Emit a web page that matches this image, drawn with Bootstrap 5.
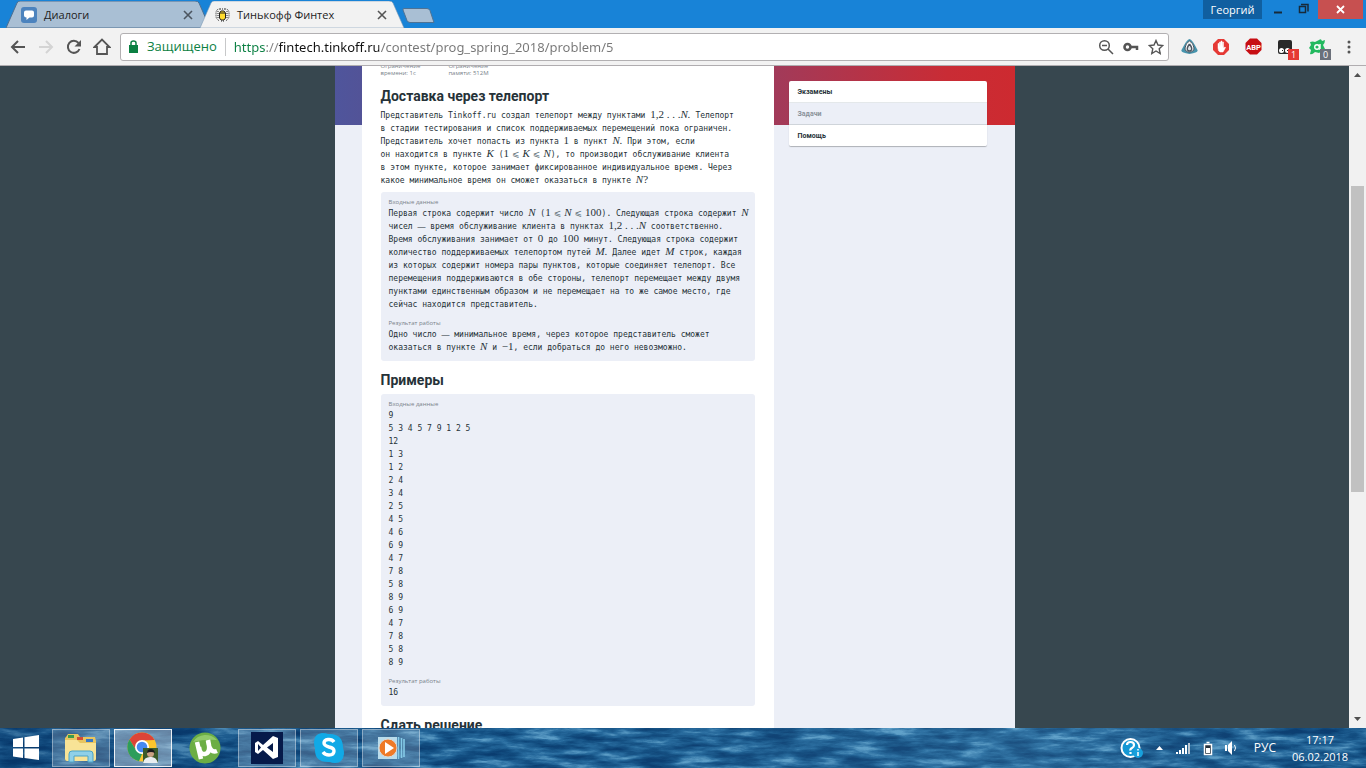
<!DOCTYPE html>
<html lang="ru">
<head>
<meta charset="utf-8">
<meta name="viewport" content="width=device-width, initial-scale=1">
<title>Тинькофф Финтех</title>
<link href="https://cdn.jsdelivr.net/npm/bootstrap@5.3.0/dist/css/bootstrap.min.css" rel="stylesheet">
<style>
body{font-family:"Open Sans","Noto Sans",sans-serif;background:#37474f}
button{border:0;background:none;padding:0;color:inherit}
svg{display:block;flex:none}
/* window frame */
.titlebar{background:#1883d7;height:28px;padding-left:6px}
.tab-shape{position:relative;width:205px;margin-right:-11px;color:#222;font-size:11px}
.tab-shape>svg.tab-bg{position:absolute;left:0;top:1px}
.tab-row{position:relative;height:28px;padding:2px 10px 0 15px;gap:7px}
.tab-row a{color:#222;text-decoration:none}
.user-btn{background:#105fa0;color:#fff;font-size:11px;width:59px;height:19px;line-height:19px}
.win-btn{width:26px;height:19px}
.close-btn{background:#c75050;width:45px;height:19px;margin-right:3px}
.toolbar{background:#f2f2f2;height:38px;border-bottom:1px solid #b0adb0;padding:4px 1px 4px 4px}
.nav-btn{width:28px;height:28px;display:flex;align-items:center;justify-content:center}
.omnibox{height:28px;background:#fff;border:1px solid #b2b0b2;border-radius:3px;margin-left:4px;padding:0 4px 0 8px;font-size:13px}
.secure{color:#0b8043;margin-left:9px;padding-right:8px}
.url-field{border:0;outline:0;padding:0;height:24px;font-size:13px;font-family:"Noto Sans",sans-serif;color:transparent;-webkit-background-clip:text;background-clip:text;background-image:linear-gradient(90deg,#0b8043 0 32px,#808080 32px 45px,#111 45px 145px,#777 145px)}
.ext{width:32px;height:28px;position:relative;display:flex;align-items:center;justify-content:center}
.ext-count{position:absolute;left:19px;top:16px;width:11px;height:11px;font-size:9px;line-height:11px;color:#fff;background:#e53935;text-align:center}
.ext-count.idle{background:#6b707a}
/* page */
.viewport{min-height:0}
.site{max-width:680px;background:#eceff7;display:grid;grid-template-columns:27px 412px 1fr;grid-template-rows:59px 1fr;margin:0 auto;flex:1;overflow:hidden}
.hero{grid-area:1/1/2/4;background:linear-gradient(90deg,#4f559c 0,#545295 6%,#a23a59 65%,#c92c35 90%,#cd2a30)}
.problem{grid-area:1/2/3/3;background:#fff;padding:0 19px;color:#263238;min-height:0;font:8px/13px "DejaVu Sans Mono",monospace}
.problem p,.problem pre{margin:0;font:inherit;overflow:visible}
.problem p{white-space:nowrap}
.problem pre{white-space:pre}
.limits{font:6px/7px "Open Sans",sans-serif;color:#78828a;margin-top:-3px;gap:28px}
.problem h2{font:700 14px/20px "Roboto",sans-serif;color:#263238;margin:9px 0 4px}
.problem h2.first{margin:9px 0 3px}
.databox{background:#eceff7;border-radius:3px;padding:6px 8px 7px}
.statement{margin-top:5px}
.databox h3{font:6px/9px "Open Sans",sans-serif;color:#78828a;margin:0}
.databox h3.result{margin-top:8px}
.tex{font:11px/1px "Liberation Serif",serif}
.tex b{font:9px/1px "DejaVu Sans",sans-serif;color:#607078;padding:0 3px}
.dash{font:8px/1px "Liberation Serif",serif}
.side{grid-area:1/3/3/4;padding:15px 28px 0 15px}
.side .list-group{--bs-list-group-border-radius:2px;box-shadow:0 1px 1px #0004}
.side .list-group-item{font:700 7px/12px "Roboto",sans-serif;padding:5px 9px 4px;border:0;border-bottom:1px solid #e4e8ea;color:#263238}
.side .list-group-item.current{background:#eceff7;color:#8b939b;border-color:#cfd4da}
.side .list-group-item:last-child{border-bottom:0}
.scroll-rail{width:17px;background:#f1f1f1}
.rail-gap{flex:0 1 103px}
.thumb{flex:0 1 306px;background:#c1c1c1;margin:0 2px}
/* taskbar */
.taskbar{height:40px;background:#175789;color:#fff;position:relative;overflow:hidden}
.taskbar>.sea{position:absolute;inset:0;width:100%;height:100%}
.taskbar>.tasks{position:relative;height:40px}
.start{width:52px}
.task{width:58px;height:38px;display:flex;align-items:center;justify-content:center;border:1px solid transparent}
.task.open{background:#ffffff33;border-color:#ffffff60}
.task.focused{background:#ffffff60;border-color:#fffd}
.tray{gap:12px;padding-right:14px;font-size:12px}
.clock{font-size:11px;line-height:17px;width:64px}
</style>
</head>
<body>
<div class="vh-100 d-flex flex-column overflow-hidden">
<header class="flex-shrink-0">
 <div class="titlebar d-flex align-items-start">
  <div class="tab-shape">
   <svg class="tab-bg" width="205" height="27" viewBox="0 0 205 27"><path d="M0 27 11 2Q12 0 14 0H189Q192 0 193 2L204 27Z" fill="#a9bfd4" stroke="#4d6f91"/></svg>
   <div class="tab-row d-flex align-items-center">
    <svg width="16" height="16" viewBox="0 0 16 16"><rect width="16" height="16" rx="3" fill="#4c83be"/><path d="M5 3.500h6q2 0 2 2v3q0 2-2 2H8.500l-3 2.500v-2.500q-2.500 0-2.500-2v-3q0-2 2-2" fill="#fff"/></svg>
    <a href="#" class="flex-fill">Диалоги</a>
    <button aria-label="Закрыть вкладку" class="me-2"><svg width="10" height="10" viewBox="0 0 10 10"><path d="m1 1 8 8M9 1 1 9" stroke="#4c5560" stroke-width="1.600"/></svg></button>
   </div>
  </div>
  <div class="tab-shape">
   <svg class="tab-bg" width="205" height="27" viewBox="0 0 205 27"><path d="M0 27 11 2Q12 0 14 0H189Q192 0 193 2L204 27Z" fill="#f2f2f2" stroke="#7a98b5" stroke-width=".6"/></svg>
   <div class="tab-row d-flex align-items-center">
    <svg width="15" height="14" viewBox="0 0 15 14"><g stroke="#222" fill="none" stroke-dasharray="1 1"><path d="M5 1Q1 1 1 5v4q1 3 4 4M10 1q4 0 4 4v4q-1 3-4 4M3 3v8M12 3v8M5 1h5M6 13h4"/></g><path d="M4.500 5 6 3h3l1.500 2v5L9 12H6l-1.500-2z" fill="#ffdc2e" stroke="#222"/><path d="M5 5h5" stroke="#222"/></svg>
    <a href="#" class="flex-fill">Тинькофф Финтех</a>
    <button aria-label="Закрыть вкладку" class="me-2"><svg width="10" height="10" viewBox="0 0 10 10"><path d="m1 1 8 8M9 1 1 9" stroke="#555" stroke-width="1.600"/></svg></button>
   </div>
  </div>
  <button aria-label="Новая вкладка" class="mt-2 ms-2"><svg width="34" height="16" viewBox="0 0 34 16"><path d="M2 .5h23q2 0 3 2l4 12H8q-2 0-3-2L1 2Q.5.5 2 .5" fill="#a9bfd4" stroke="#4d7295"/></svg></button>
  <div class="ms-auto d-flex">
   <button class="user-btn me-1">Георгий</button>
   <button class="win-btn" aria-label="Свернуть"><svg width="26" height="19"><path d="M8 12.500h8" stroke="#172a3a" stroke-width="2"/></svg></button>
   <button class="win-btn" aria-label="Развернуть"><svg width="26" height="19"><path d="M7.500 6.500h6v6h-6zM9 4.500h7v7" fill="none" stroke="#172a3a" stroke-width="1.500"/></svg></button>
   <button class="close-btn" aria-label="Закрыть"><svg width="45" height="19"><path d="m19 6 7 7M26 6l-7 7" stroke="#fff" stroke-width="1.800"/></svg></button>
  </div>
 </div>
 <div class="toolbar d-flex align-items-center">
  <button class="nav-btn" aria-label="Назад"><svg width="16" height="14" viewBox="0 0 16 14"><path d="M15 7H2M8 1 2 7l6 6" fill="none" stroke="#555" stroke-width="2"/></svg></button>
  <button class="nav-btn" disabled aria-label="Вперёд"><svg width="16" height="14" viewBox="0 0 16 14"><path d="M1 7h13M8 1l6 6-6 6" fill="none" stroke="#d4d4d4" stroke-width="2"/></svg></button>
  <button class="nav-btn" aria-label="Обновить"><svg width="16" height="16" viewBox="0 0 16 16"><path d="M13.500 10A6 6 0 1 1 12.500 4" fill="none" stroke="#555" stroke-width="2"/><path d="M15 1v6.500H8.500z" fill="#555"/></svg></button>
  <button class="nav-btn" aria-label="Домой"><svg width="18" height="17" viewBox="0 0 18 17"><path d="M1.500 9 9 1.500 16.500 9H14v7H4V9z" fill="none" stroke="#555" stroke-width="1.800"/></svg></button>
  <div class="omnibox flex-fill d-flex align-items-center">
   <svg width="9" height="13" viewBox="0 0 9 13"><path d="M0 5h9v8H0z" fill="#0b8043"/><path d="M2 6V3q0-2 2.500-2T7 3v3" fill="none" stroke="#0b8043" stroke-width="1.500"/></svg>
   <label class="secure" for="url">Защищено</label><div class="vr my-1 me-2"></div>
   <input id="url" class="url-field flex-fill" value="https://fintech.tinkoff.ru/contest/prog_spring_2018/problem/5">
   <div class="d-flex gap-2">
   <button aria-label="Масштаб"><svg width="16" height="16" viewBox="0 0 16 16" fill="none" stroke="#555" stroke-width="1.500"><circle cx="6.500" cy="6.500" r="4.800"/><path d="m10 10 5 5M4 6.500h5"/></svg></button>
   <button aria-label="Пароли"><svg width="18" height="16" viewBox="0 0 18 16"><circle cx="5.500" cy="8" r="3" fill="none" stroke="#555" stroke-width="2.600"/><path d="M8 8h7v3" fill="none" stroke="#555" stroke-width="2.500"/></svg></button>
   <button aria-label="В закладки"><svg width="16" height="16" viewBox="0 0 16 16"><path d="m8 1.500 2 4.500 4.800.5-3.600 3.200 1 4.800L8 12l-4.200 2.500 1-4.800L1.200 6.500 6 6z" fill="none" stroke="#555" stroke-width="1.400"/></svg></button>
   </div>
  </div>
  <div class="d-flex ms-1">
   <button class="ext" aria-label="Дельта"><svg width="17" height="17" viewBox="0 0 17 17"><path d="M8.500 1Q11 1 16.500 12q1 3-8 4-9-1-8-4Q6 1 8.500 1" fill="#4794ad"/><path d="M8.500 3q4 2 4.500 7 0 4-4.500 4T4 10q.5-5 4.500-7" fill="#fff" stroke="#4b5560"/><path d="M8.500 6q3 4 2 6-2 2-4 0-1-2 2-6" fill="#dce4e8" stroke="#4b5560" stroke-width="1.400"/></svg></button>
   <button class="ext" aria-label="Блокировщик"><svg width="16" height="16" viewBox="0 0 16 16"><path d="M5 0h6l5 5v6l-5 5H5l-5-5V5z" fill="#e53935"/><path d="M5 9V4.500h1V8l.5-5h1v5L8 2h1v6l.5-5h1v6L12 8q1 0 0 1.500L10 13H7Q5 12 5 9" fill="#fff" stroke="#fff" stroke-width=".5"/></svg></button>
   <button class="ext" aria-label="ABP"><svg width="17" height="17" viewBox="0 0 17 17"><path d="M5 .5h7L16.500 5v7L12 16.500H5L.5 12V5z" fill="#c70d12"/><text x="8.500" y="11.500" font-size="7.500" font-weight="700" text-anchor="middle" fill="#fff" font-family="Roboto">ABP</text></svg></button>
   <button class="ext" aria-label="Скрипты"><svg width="16" height="16" viewBox="0 0 16 16"><path d="M3 1h10q2 0 2 2v10q0 2-2 2H3q-2 0-2-2V3q0-2 2-2" fill="#292929"/><circle cx="4.500" cy="11.500" r="2.500" fill="#fff"/><circle cx="10.500" cy="11.500" r="2.500" fill="#fff"/><path d="M5 11.500h1M10 11.500h1" stroke="#222"/></svg><span class="ext-count">1</span></button>
   <button class="ext" aria-label="Avast"><svg width="17" height="16" viewBox="0 0 17 16"><path d="M1 3q3-1 5 0l4-2q2-2 3 1l3-1q0 3-2 5l2 4q0 3-3 2l-3 2-4-1q-3 3-5 2l1-4-2-2 2-3z" fill="#22b95f"/><circle cx="8" cy="8" r="2.300" fill="none" stroke="#fff" stroke-width="1.400"/><path d="M11 5v6" stroke="#fff" stroke-width="1.400"/></svg><span class="ext-count idle">0</span></button>
   <button class="ext" aria-label="Меню"><svg width="4" height="14" viewBox="0 0 4 14" fill="#555"><circle cx="2" cy="2" r="1.500"/><circle cx="2" cy="7" r="1.500"/><circle cx="2" cy="12" r="1.500"/></svg></button>
  </div>
 </div>
</header>

<main class="viewport d-flex flex-fill">
 <div class="flex-fill d-flex overflow-hidden">
 <div class="site">
  <div class="hero"></div>
  <article class="problem">
   <div class="limits d-flex"><div>Ограничение<br>времени: 1с</div><div>Ограничение<br>памяти: 512M</div></div>
   <h2 class="first">Доставка через телепорт</h2>
   <p>Представитель Tinkoff.ru создал телепорт между пунктами <span class="tex">1,2 . . .<i>N.</i></span> Телепорт<br>в стадии тестирования и список поддерживаемых перемещений пока ограничен.<br>Представитель хочет попасть из пункта <span class="tex">1</span> в пункт <span class="tex"><i>N.</i></span> При этом, если<br>он находится в пункте <span class="tex"><i>K</i></span> (<span class="tex">1<b>⩽</b><i>K</i><b>⩽</b><i>N</i></span>), то производит обслуживание клиента<br>в этом пункте, которое занимает фиксированное индивидуальное время. Через<br>какое минимальное время он сможет оказаться в пункте <span class="tex"><i>N</i>?</span></p>
   <section class="databox statement">
    <h3>Входные данные</h3>
    <p>Первая строка содержит число <span class="tex"><i>N</i></span> (<span class="tex">1<b>⩽</b><i>N</i><b>⩽</b>100</span>). Следующая строка содержит <span class="tex"><i>N</i></span><br>чисел <span class="dash">—</span> время обслуживание клиента в пунктах <span class="tex">1,2 . . .<i>N</i></span> соответственно.<br>Время обслуживания занимает от <span class="tex">0</span> до <span class="tex">100</span> минут. Следующая строка содержит<br>количество поддерживаемых телепортом путей <span class="tex"><i>M.</i></span> Далее идет <span class="tex"><i>M</i></span> строк, каждая<br>из которых содержит номера пары пунктов, которые соединяет телепорт. Все<br>перемещения поддерживаются в обе стороны, телепорт перемещает между двумя<br>пунктами единственным образом и не перемещает на то же самое место, где<br>сейчас находится представитель.</p>
    <h3 class="result">Результат работы</h3>
    <p>Одно число <span class="dash">—</span> минимальное время, через которое представитель сможет<br>оказаться в пункте <span class="tex"><i>N</i></span> и <span class="tex">−1</span>, если добраться до него невозможно.</p>
   </section>
   <h2>Примеры</h2>
   <section class="databox">
    <h3>Входные данные</h3>
<pre>9
5 3 4 5 7 9 1 2 5
12
1 3
1 2
2 4
3 4
2 5
4 5
4 6
6 9
4 7
7 8
5 8
8 9
6 9
4 7
7 8
5 8
8 9</pre>
    <h3 class="result">Результат работы</h3>
    <pre>16</pre>
   </section>
   <h2>Сдать решение</h2>
  </article>
  <nav class="side">
   <div class="list-group">
    <a href="#" class="list-group-item">Экзамены</a>
    <a href="#" class="list-group-item current">Задачи</a>
    <a href="#" class="list-group-item">Помощь</a>
   </div>
  </nav>
 </div>
 </div>
 <div class="scroll-rail d-flex flex-column">
  <button aria-label="Вверх"><svg width="17" height="17"><path d="m5 11 3.500-4 3.500 4z" fill="#505050"/></svg></button>
  <div class="rail-gap"></div><div class="thumb"></div>
  <button class="mt-auto" aria-label="Вниз"><svg width="17" height="17"><path d="m5 6 3.500 4L12 6z" fill="#505050"/></svg></button>
 </div>
</main>

<footer class="taskbar flex-shrink-0">
 <svg class="sea" preserveAspectRatio="none"><defs>
  <filter id="waves" x="0" y="0" width="100%" height="100%" color-interpolation-filters="sRGB"><feTurbulence type="fractalNoise" baseFrequency=".025 .13" numOctaves="5" seed="12"/><feColorMatrix values="1.800 0 0 0 -.4 1.800 0 0 0 -.4 1.800 0 0 0 -.4 0 0 0 0 1"/><feComponentTransfer><feFuncR type="table" tableValues=".04 .08 .16 .38"/><feFuncG type="table" tableValues=".24 .32 .43 .64"/><feFuncB type="table" tableValues=".44 .52 .63 .8"/></feComponentTransfer></filter>
  <linearGradient id="shade"><stop offset="0" stop-color="#022d60" stop-opacity=".4"/><stop offset=".35" stop-color="#022d60" stop-opacity=".05"/><stop offset=".75" stop-color="#7ab0d0" stop-opacity=".15"/><stop offset="1" stop-color="#022d60" stop-opacity=".1"/></linearGradient></defs>
  <rect width="100%" height="100%" filter="url(#waves)"/><rect width="100%" height="100%" fill="url(#shade)"/></svg>
 <div class="tasks d-flex align-items-center">
  <button aria-label="Пуск" class="start d-flex justify-content-center"><svg width="28" height="26" viewBox="0 0 28 26" fill="#fff"><path d="m1 4 10-1.500V12H1zM12.500 2.200 27 0v12H12.500zM1 13.500h10V23L1 21.500zM12.500 13.500H27V25l-14.500-2z"/></svg></button>
  <div class="d-flex gap-1">
  <button class="task open" aria-label="Проводник"><svg width="34" height="30" viewBox="0 0 34 30"><path d="M2 4 4 1h10l2 3h15l1 4v18q0 2-2 2H3q-2 0-2-2V5z" fill="#e8c560"/><path d="M4 2h6v3H4z" fill="#3d9c4a"/><path d="M13 4h6v3h-6z" fill="#d34d32"/><path d="M22 6h7v3h-7z" fill="#3978c4"/><path d="M1 7h12l3 3h16v16l-2 2H3l-2-2z" fill="#f8e396"/><path d="M5 29v-8q0-3 3-3h18q3 0 3 3v8h-5v-6H10v6z" fill="#8fd0e8" stroke="#4ba3c7"/></svg></button>
  <button class="task open focused" aria-label="Chrome"><svg width="32" height="32" viewBox="0 0 32 32"><circle cx="15" cy="15" r="14.500" fill="#fbc52d"/><path d="M2.500 7.500A14.500 14.500 0 0 1 27.600 8L15 8.500 9 18z" fill="#dc4437"/><path d="M2.500 7.500 9 18l6 4-3 7.300A14.500 14.500 0 0 1 2.500 7.500" fill="#2d9d5b"/><circle cx="15" cy="15" r="7" fill="#fff"/><circle cx="15" cy="15" r="5.300" fill="#4688ef"/><path d="M16 16h15v15H16z" fill="#3a5b2a"/><path d="M16 31q1-6 7-6 6-1 8 6" fill="#e8edf0"/><circle cx="23.500" cy="21.500" r="3.500" fill="#caa183"/><path d="M20 21q0-4 4-4 3 0 4 4-4-2-8 0" fill="#19191b"/></svg></button>
  <button class="task" aria-label="uTorrent"><svg width="32" height="32" viewBox="0 0 32 32"><circle cx="16" cy="16" r="15.500" fill="#6cae45"/><path d="M4 10A15 15 0 0 1 28 8Q16 7 4 10" fill="#91c96a"/><path d="m8 10 4 17M10 15q1 8 6 7 5-1 4-9l-1-5M19 9q2 13 9 10" fill="none" stroke="#fff" stroke-width="4.500"/></svg></button>
  <button class="task open" aria-label="Visual Studio"><svg width="32" height="32" viewBox="0 0 32 32"><path d="M0 0h32v32H0z" fill="#061a4a"/><path d="m22 4 5 2v19l-5 2L12 18l-5 4-3-2v-9l3-2 5 4zM7 12v7l3-3.500zm15-1-6 4.500 6 4.500z" fill="#fff" fill-rule="evenodd"/></svg></button>
  <button class="task open" aria-label="Skype"><svg width="30" height="30" viewBox="0 0 30 30"><path d="M8 0q4 0 6 1 15-1 15 14 1 2 1 6-1 9-9 9-3 0-5-1Q0 30 1 15 0 13 0 9 0 1 8 0" fill="#11a9e6"/><path d="M20 9q-2-3-6-2.500-4 .5-4 3.500 0 2.500 5 4 5 1 5 4 0 4-5 4-4 0-6-3" fill="none" stroke="#fff" stroke-width="3.400"/></svg></button>
  <button class="task open" aria-label="Проигрыватель"><svg width="28" height="24" viewBox="0 0 28 24"><path d="M1 1h19v22H1z" fill="#b9dcec"/><path d="M21.500 1v22M24.500 2v20M27 3v18" stroke="#85cbe8" stroke-width="1.600"/><circle cx="11" cy="12" r="9" fill="#ee7a28" stroke="#d8d8d8"/><path d="m8 6 9 6-9 6z" fill="#fff"/></svg></button>
  </div>
  <div class="tray ms-auto d-flex align-items-center">
   <svg width="23" height="23" viewBox="0 0 23 23"><circle cx="10.500" cy="11" r="9" fill="#1598d4" stroke="#fff" stroke-width="2"/><path d="M7 8q0-3 3.500-3T14 8q0 2-2 3t-1.500 2.500M10.500 15v2" fill="none" stroke="#fff" stroke-width="2.200"/><circle cx="18" cy="16" r="5" fill="#18a0dc"/><path d="M18 15v4M18 12v1.500" stroke="#fff" stroke-width="1.500"/></svg>
   <svg width="9" height="6"><path d="m1 5 3.500-4L8 5z" fill="#fff"/></svg>
   <svg width="15" height="13" fill="#fff"><path d="M0 10h2v2H0zM3 8h2v4H3zM6 6h2v6H6zM9 3h2v9H9z"/><path d="M12 1h2v11h-2z" fill="#b8c6d2"/></svg>
   <svg width="10" height="15"><path d="M1.500 3.500h7v10h-7zM3.500 1.500h3" fill="#26323d" stroke="#fff" stroke-width="1.500"/><path d="M3 7h4v5H3z" fill="#fff"/></svg>
   <svg width="13" height="14"><path d="M0 4h2v6H0zM3 4l4-4v14l-4-4z" fill="#fff"/><path d="M9.500 4q2 3 0 6" fill="none" stroke="#fff"/></svg>
   <span class="ms-1">РУС</span>
   <time class="clock text-center">17:17<br>06.02.2018</time>
  </div>
 </div>
</footer>
</div>
<script src="https://cdn.jsdelivr.net/npm/bootstrap@5.3.0/dist/js/bootstrap.bundle.min.js"></script>
</body>
</html>
